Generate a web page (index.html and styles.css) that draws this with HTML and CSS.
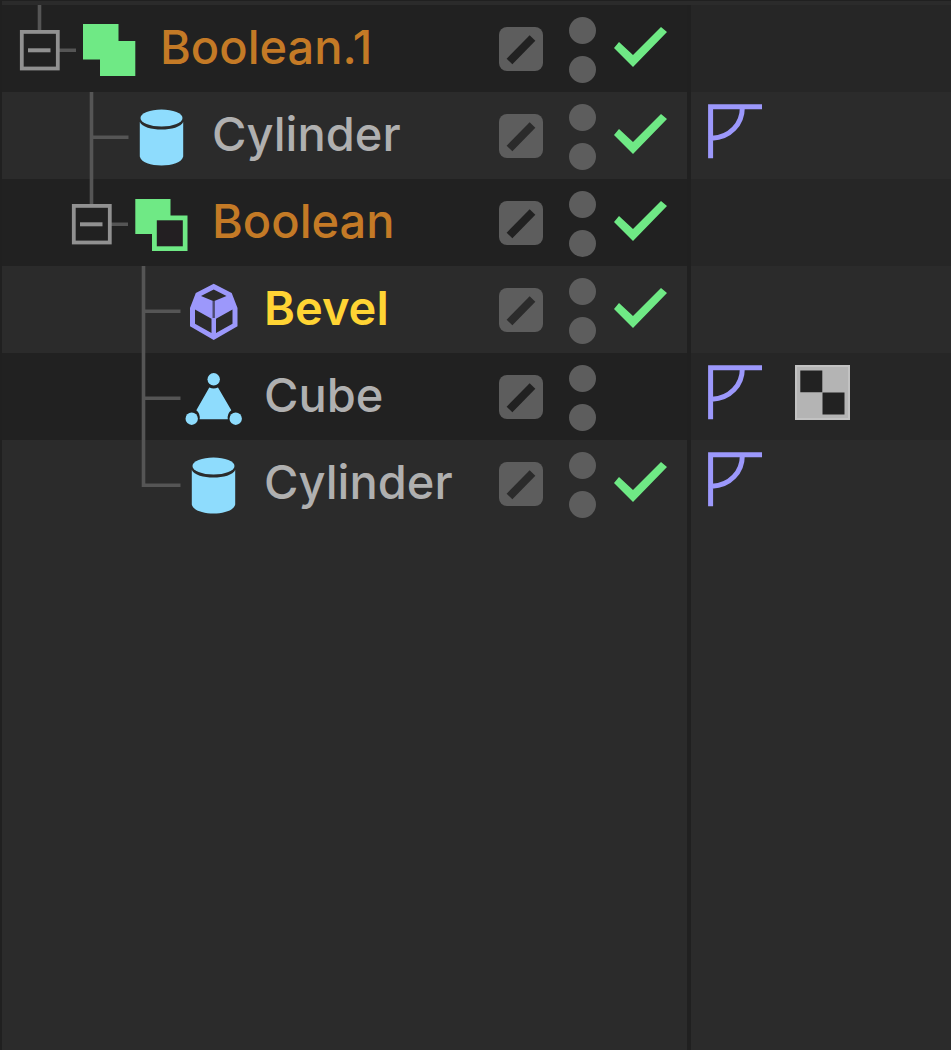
FILE: index.html
```html
<!DOCTYPE html>
<html lang="en">
<head>
  <meta charset="UTF-8">
  <title>Object Manager</title>
  <meta name="viewport" content="width=device-width, initial-scale=1.0">
  <link rel="stylesheet" href="styles.css">
</head>
<body>

  <!-- shared icons -->
  <svg class="sprite" aria-hidden="true">
    <symbol id="toggle-open" viewBox="0 0 70 87">
      <path d="M26.5 0V26M46 45.3H63" fill="none" stroke="#555" stroke-width="3.6"/>
      <rect x="8.8" y="26.9" width="36" height="36.6" fill="none" stroke="#919191" stroke-width="3.8"/>
      <path d="M15 45.3H37.5" stroke="#919191" stroke-width="4"/>
    </symbol>
    <symbol id="branch-mid" viewBox="0 0 70 87">
      <path d="M26.5 0V87M26.5 45.3H63.5" fill="none" stroke="#555" stroke-width="3.6"/>
    </symbol>
    <symbol id="branch-end" viewBox="0 0 70 87">
      <path d="M26.5 0V45.3H63.5" fill="none" stroke="#555" stroke-width="3.6"/>
    </symbol>

    <symbol id="bool-union" viewBox="0 0 58 58">
      <path d="M3 3H38.5V20H55.3V55H20V38.5H3Z" fill="#6fe985"/>
    </symbol>
    <symbol id="bool-subtract" viewBox="0 0 58 58">
      <path d="M3.3 4H38.5V20.5H55.5V56H20V39H3.3Z" fill="#6fe985"/>
      <rect x="24.8" y="25.3" width="26" height="26" fill="#231f22"/>
    </symbol>
    <symbol id="cylinder" viewBox="0 0 58 58">
      <ellipse cx="29.5" cy="10" rx="21" ry="8.6" fill="#8edcfd"/>
      <path d="M7.8 14C12 24 47 24 51.2 14V48.5C49 60.5 10 60.5 7.8 48.5Z" fill="#8edcfd"/>
    </symbol>
    <symbol id="bevel" viewBox="0 0 58 58">
      <path fill="#9c98fb" fill-rule="evenodd" d="M29.7 1.8L47.7 11L53.5 26V44.3L29.7 58L6 44.3V26L11.8 11ZM29.7 7.5L17 14L29.7 19.3L42.5 14ZM11 27.5V41.8L27.5 51V36.8ZM48.5 27.5L32 36.8V51L48.5 41.8Z"/>
      <path d="M29.7 19V36" stroke="#4d4b70" stroke-width="2.4"/>
    </symbol>
    <symbol id="editable" viewBox="0 0 58 58">
      <g fill="#8edcfd">
        <circle cx="29.7" cy="10.3" r="6.2"/>
        <circle cx="7.7" cy="49.7" r="6.2"/>
        <circle cx="51.7" cy="49.7" r="6.2"/>
        <path d="M25.3 18.5Q29.7 20.3 34 18.5L47.3 41.2Q43 44.5 43.8 50.2H15.6Q16.4 44.5 12.3 41.2Z"/>
      </g>
    </symbol>

    <symbol id="phong" viewBox="0 0 55 55">
      <path d="M2.6 54.3V2.8H54M34.3 4C34.3 20 22 33.5 4 34.3" fill="none" stroke="#9c98fb" stroke-width="5"/>
    </symbol>
    <symbol id="uvw" viewBox="0 0 55 55">
      <rect width="55" height="55" fill="#b4b4b4"/>
      <path d="M1 1H54V54H1Z" fill="none" stroke="#c2c2c2" stroke-width="2"/>
      <path d="M5.3 5.5H27.3V27.3H5.3ZM27.5 27.5H49.5V49.5H27.5Z" fill="#222"/>
    </symbol>
    <symbol id="layer" viewBox="0 0 44 44">
      <path d="M10.5 34.5L33.5 11" stroke="currentColor" stroke-width="8"/>
    </symbol>
  </svg>

  <main class="manager">
    <ul class="objects">
      <li class="row">
        <div class="object">
          <button class="branch" aria-label="Collapse Boolean.1"><svg><use href="#toggle-open"/></svg></button>
          <svg class="icon"><use href="#bool-union"/></svg>
          <span class="name generator">Boolean.1</span>
          <button class="layer" aria-label="Layer"><svg><use href="#layer"/></svg></button>
          <div class="dots">
            <button class="dot" aria-label="Visible in editor"></button>
            <button class="dot" aria-label="Visible in renderer"></button>
          </div>
          <input class="check" type="checkbox" aria-label="Enable Boolean.1" checked>
        </div>
        <div class="tags"></div>
      </li>

      <li class="row">
        <div class="object level-1">
          <svg class="branch"><use href="#branch-mid"/></svg>
          <svg class="icon"><use href="#cylinder"/></svg>
          <span class="name">Cylinder</span>
          <button class="layer" aria-label="Layer"><svg><use href="#layer"/></svg></button>
          <div class="dots">
            <button class="dot" aria-label="Visible in editor"></button>
            <button class="dot" aria-label="Visible in renderer"></button>
          </div>
          <input class="check" type="checkbox" aria-label="Enable Cylinder" checked>
        </div>
        <div class="tags">
          <svg class="tag"><use href="#phong"/></svg>
        </div>
      </li>

      <li class="row">
        <div class="object level-1">
          <button class="branch" aria-label="Collapse Boolean"><svg><use href="#toggle-open"/></svg></button>
          <svg class="icon"><use href="#bool-subtract"/></svg>
          <span class="name generator">Boolean</span>
          <button class="layer" aria-label="Layer"><svg><use href="#layer"/></svg></button>
          <div class="dots">
            <button class="dot" aria-label="Visible in editor"></button>
            <button class="dot" aria-label="Visible in renderer"></button>
          </div>
          <input class="check" type="checkbox" aria-label="Enable Boolean" checked>
        </div>
        <div class="tags"></div>
      </li>

      <li class="row">
        <div class="object level-2">
          <svg class="branch"><use href="#branch-mid"/></svg>
          <svg class="icon"><use href="#bevel"/></svg>
          <span class="name selected">Bevel</span>
          <button class="layer" aria-label="Layer"><svg><use href="#layer"/></svg></button>
          <div class="dots">
            <button class="dot" aria-label="Visible in editor"></button>
            <button class="dot" aria-label="Visible in renderer"></button>
          </div>
          <input class="check" type="checkbox" aria-label="Enable Bevel" checked>
        </div>
        <div class="tags"></div>
      </li>

      <li class="row">
        <div class="object level-2">
          <svg class="branch"><use href="#branch-mid"/></svg>
          <svg class="icon"><use href="#editable"/></svg>
          <span class="name">Cube</span>
          <button class="layer" aria-label="Layer"><svg><use href="#layer"/></svg></button>
          <div class="dots">
            <button class="dot" aria-label="Visible in editor"></button>
            <button class="dot" aria-label="Visible in renderer"></button>
          </div>
          <input class="check" type="checkbox" aria-label="Enable Cube">
        </div>
        <div class="tags">
          <svg class="tag"><use href="#phong"/></svg>
          <svg class="tag"><use href="#uvw"/></svg>
        </div>
      </li>

      <li class="row">
        <div class="object level-2">
          <svg class="branch"><use href="#branch-end"/></svg>
          <svg class="icon"><use href="#cylinder"/></svg>
          <span class="name">Cylinder</span>
          <button class="layer" aria-label="Layer"><svg><use href="#layer"/></svg></button>
          <div class="dots">
            <button class="dot" aria-label="Visible in editor"></button>
            <button class="dot" aria-label="Visible in renderer"></button>
          </div>
          <input class="check" type="checkbox" aria-label="Enable Cylinder" checked>
        </div>
        <div class="tags">
          <svg class="tag"><use href="#phong"/></svg>
        </div>
      </li>
    </ul>

    <div class="row empty">
      <div></div>
      <div class="tags"></div>
    </div>
  </main>

</body>
</html>
```
FILE: styles.css
```css
:root {
  --bg: #2b2b2b;
  --row-dark: #212121;
  --tags-dark: #262626;
  --line: #202020;
  --control: #5d5d5d;
  --text: #b0b0b0;
  --orange: #c47a26;
  --yellow: #ffd434;
  --green: #6fe985;
}

* {
  box-sizing: border-box;
}

body {
  margin: 0;
  background: var(--bg);
  color: var(--text);
  font-family: Inter, "Liberation Sans", sans-serif;
  font-size: 47px;
  line-height: 56px;
}

button {
  padding: 0;
  border: 0;
  background: none;
  cursor: pointer;
}

.sprite {
  display: none;
}

.manager {
  display: flex;
  flex-direction: column;
  min-height: 100vh;
  padding-top: 4px;
  border-top: 1px solid var(--line);
  border-left: 2px solid var(--line);
}

.objects {
  margin: 0;
  padding: 0;
  list-style: none;
}

.row {
  display: grid;
  grid-template-columns: minmax(0, 1fr) 264px;
}

.objects .row:nth-child(odd) {
  background: var(--row-dark);
}

.objects .row:nth-child(odd) .tags {
  background: var(--tags-dark);
}

.row.empty {
  flex: 1;
}

.object {
  display: flex;
  align-items: center;
  height: 87px;
  padding-left: 11px;
  padding-right: 20px;
}

.level-1 {
  padding-left: 63px;
}

.level-2 {
  padding-left: 115px;
}

.branch,
.branch svg {
  display: block;
  flex: none;
  width: 70px;
  height: 87px;
}

.icon {
  flex: none;
  width: 58px;
  height: 58px;
  margin-top: 3px;
  margin-left: -3px;
}

.name {
  flex: 1;
  padding-bottom: 4px;
  padding-left: 22px;
  font-weight: 500;
  white-space: nowrap;
}

.generator {
  color: var(--orange);
}

.selected {
  color: var(--yellow);
  font-weight: 600;
}

.layer {
  width: 44px;
  height: 44px;
  border-radius: 8px;
  background: var(--control);
  color: var(--bg);
}

.row:nth-child(odd) .layer {
  color: var(--row-dark);
}

.layer svg {
  display: block;
  width: 44px;
  height: 44px;
}

.dots {
  display: flex;
  flex-direction: column;
  gap: 12px;
  margin-left: 26px;
  padding-top: 3px;
}

.dot {
  width: 27px;
  height: 27px;
  border-radius: 50%;
  background: var(--control);
}

.check {
  appearance: none;
  width: 53px;
  height: 40px;
  margin: 0 0 3px 18px;
  clip-path: polygon(0 21px, 5px 15px, 19px 28px, 47px 0, 53px 5px, 19px 40px);
  cursor: pointer;
}

.check:checked {
  background: var(--green);
}

.tags {
  display: flex;
  align-items: flex-start;
  gap: 32px;
  padding: 12px 17px;
  border-left: 4px solid var(--line);
}

.tag {
  width: 55px;
  height: 55px;
}
```
